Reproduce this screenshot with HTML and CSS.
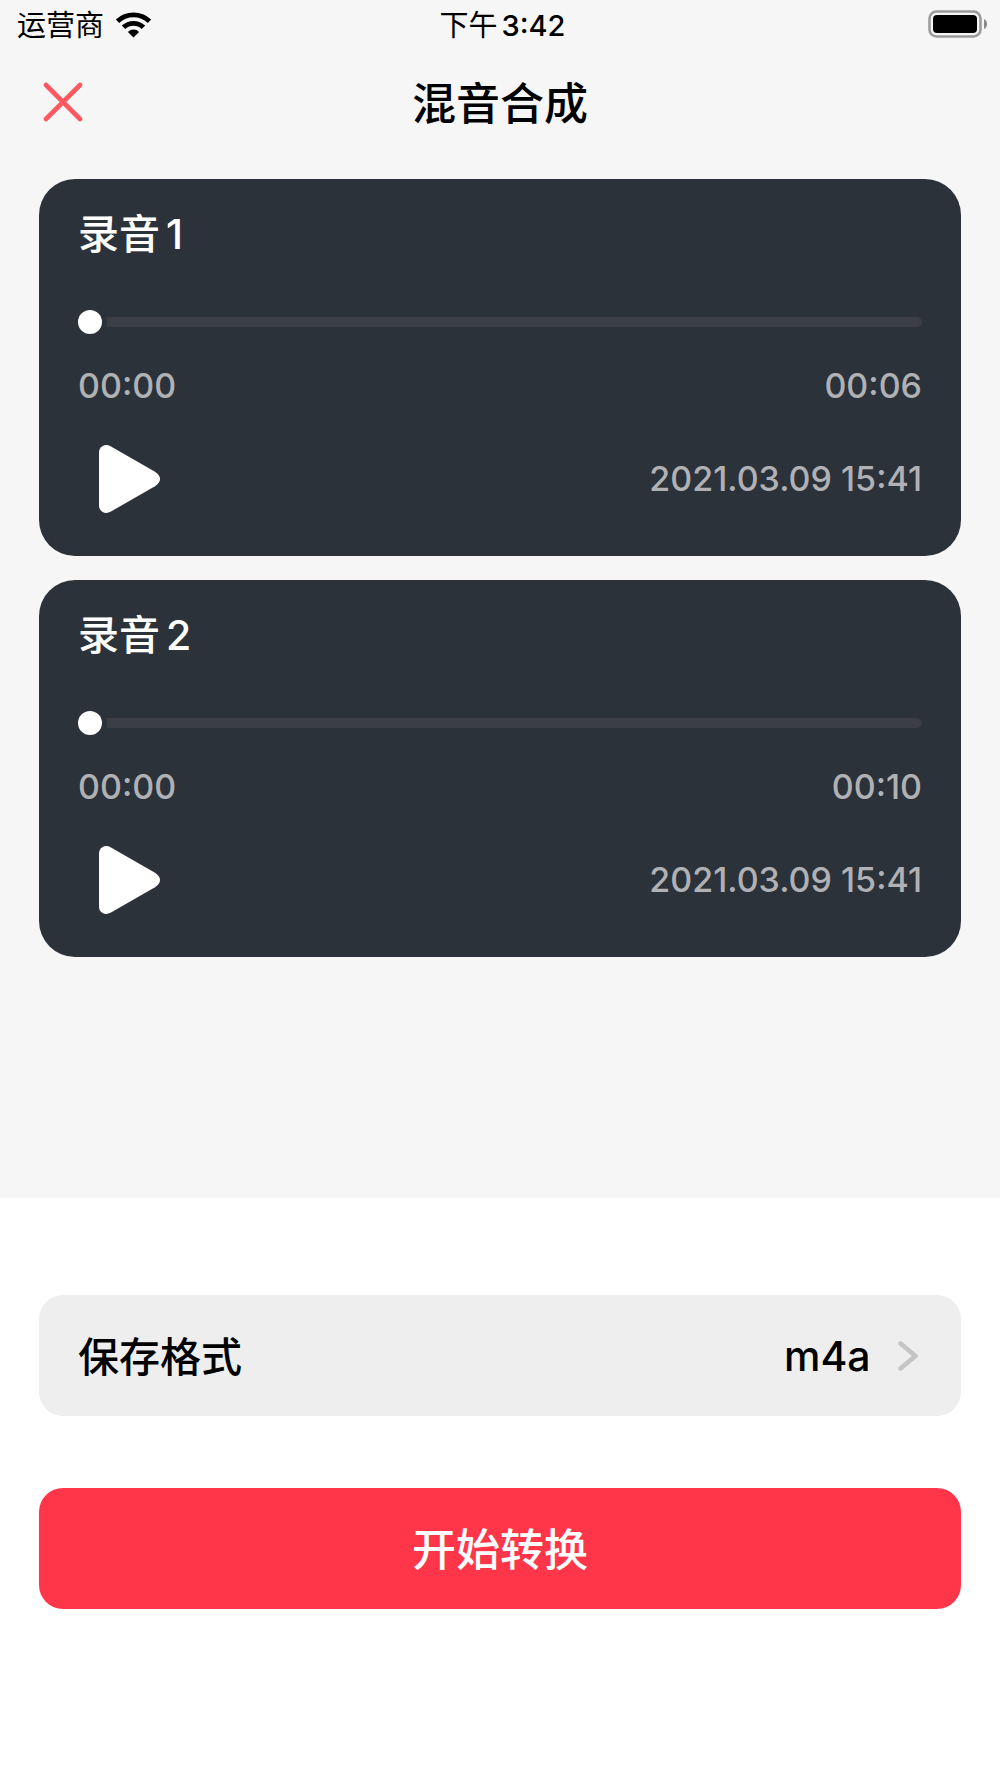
FILE: index.html
```
<!DOCTYPE html>
<html lang="zh-CN">
<head>
    <meta charset="UTF-8">
    <meta name="viewport" content="width=device-width, initial-scale=1.0">
    <title>混音合成</title>
    <link rel="stylesheet" href="styles.css">
</head>
<body>
    <div class="status">
        <div class="carrier">
            <span>运营商</span>
            <svg width="37" height="27" viewBox="0 0 37 27">
                <path d="M0.8 8.6 A25.6 25.6 0 0 1 36.2 8.6 L32.8 12 A20.6 20.6 0 0 0 4.2 12 Z"/>
                <path d="M6.8 14.6 A17 17 0 0 1 30.2 14.6 L26.7 18.1 A12 12 0 0 0 10.3 18.1 Z"/>
                <path d="M12.9 20.9 A8 8 0 0 1 24.1 20.9 L18.5 26.5 Z"/>
            </svg>
        </div>
        <div class="clock">下午<span class="time">3:42</span></div>
        <div class="battery">
            <svg width="60" height="28" viewBox="0 0 60 28">
                <rect x="1.5" y="1.5" width="51" height="25" rx="7" fill="none" stroke="#9b9b9b" stroke-width="2.6"/>
                <rect x="5" y="5" width="44" height="18" rx="4"/>
                <path d="M56 9 Q59 10.5 59 14 Q59 17.5 56 19 Z" fill="#888"/>
            </svg>
        </div>
    </div>

    <header class="nav">
        <button class="close" type="button" aria-label="关闭">
            <svg width="40" height="40" viewBox="0 0 40 40">
                <path d="M3 3 L37 37 M37 3 L3 37" fill="none" stroke="#ff5861" stroke-width="4.6" stroke-linecap="round"/>
            </svg>
        </button>
        <h1>混音合成</h1>
    </header>

    <main class="list">
        <section class="card">
            <h2>录音<span class="num">1</span></h2>
            <input class="slider" type="range" min="0" max="6" value="0" aria-label="录音1">
            <div class="row times">
                <span>00:00</span>
                <span>00:06</span>
            </div>
            <div class="row">
                <button class="play" type="button" aria-label="播放">
                    <svg width="61" height="68" viewBox="0 0 61 68">
                        <path d="M0 7.5 Q0 3 3.6 1 Q7.5 -1 12 1.5 L56 26.8 Q61 30 61 34 Q61 38 56 41.2 L12 66.5 Q7.5 69 3.6 67 Q0 65 0 60.5 Z" fill="#fff"/>
                    </svg>
                </button>
                <span>2021.03.09 15:41</span>
            </div>
        </section>
        <section class="card">
            <h2>录音<span class="num">2</span></h2>
            <input class="slider" type="range" min="0" max="10" value="0" aria-label="录音2">
            <div class="row times">
                <span>00:00</span>
                <span>00:10</span>
            </div>
            <div class="row">
                <button class="play" type="button" aria-label="播放">
                    <svg width="61" height="68" viewBox="0 0 61 68">
                        <path d="M0 7.5 Q0 3 3.6 1 Q7.5 -1 12 1.5 L56 26.8 Q61 30 61 34 Q61 38 56 41.2 L12 66.5 Q7.5 69 3.6 67 Q0 65 0 60.5 Z" fill="#fff"/>
                    </svg>
                </button>
                <span>2021.03.09 15:41</span>
            </div>
        </section>
    </main>

    <form class="panel">
        <div class="format">
            <label for="format">保存格式</label>
            <select id="format">
                <option>m4a</option>
            </select>
            <svg width="20" height="30" viewBox="0 0 20 30">
                <path d="M2.5 2.5 L17.5 15 L2.5 27.5" fill="none" stroke="#c5c5c7" stroke-width="4.6" stroke-linecap="round" stroke-linejoin="round"/>
            </svg>
        </div>
        <button class="start" type="button">开始转换</button>
    </form>
</body>
</html>
```
FILE: styles.css
```
*{
    box-sizing: border-box;
    margin: 0;
    padding: 0;
}
body{
    min-height: 100vh;
    display: flex;
    flex-direction: column;
    background: #f6f6f6;
    color: #000;
    font-family: Inter, "Noto Sans CJK SC", sans-serif;
}
svg{
    display: block;
}
button{
    border: none;
    background: none;
    font-family: inherit;
    cursor: pointer;
}
.status{
    display: grid;
    grid-template-columns: 1fr auto 1fr;
    align-items: center;
    height: 48px;
    padding: 0 12px 0 17px;
    font-size: 29px;
    line-height: 44px;
}
.carrier{
    display: flex;
    align-items: center;
    gap: 11px;
}
.carrier span,
.clock{
    padding-top: 4px;
}
.time{
    margin-left: 4px;
    font-weight: 500;
}
.battery{
    justify-self: end;
}
.nav{
    display: grid;
    grid-template-columns: 1fr auto 1fr;
    align-items: center;
    height: 107px;
    padding: 0 43px;
}
.close{
    justify-self: start;
}
.nav h1{
    padding-top: 4px;
    font-size: 44px;
    line-height: 60px;
    font-weight: 500;
}
.list{
    flex: 1;
    display: flex;
    flex-direction: column;
    gap: 24px;
    padding: 24px 39px;
}
.card{
    padding: 31px 39px 43px;
    border-radius: 36px;
    background: #2c323a;
    color: #b0b1b4;
    font-size: 34px;
    line-height: 40px;
    font-weight: 500;
}
.card h2{
    color: #fff;
    font-size: 41px;
    line-height: 48px;
    font-weight: 500;
}
.num{
    margin-left: 6px;
}
.slider{
    -webkit-appearance: none;
    appearance: none;
    display: block;
    width: 100%;
    height: 24px;
    margin-top: 52px;
    background: none;
}
.slider::-webkit-slider-runnable-track{
    height: 10px;
    border-radius: 5px;
    background: #3c3e46;
}
.slider::-webkit-slider-thumb{
    -webkit-appearance: none;
    width: 24px;
    height: 24px;
    margin-top: -7px;
    border-radius: 50%;
    background: #fff;
    box-shadow: 0 0 0 5px #2c323a;
}
.row{
    display: flex;
    justify-content: space-between;
    align-items: center;
}
.times{
    margin: 32px 0 39px;
}
.play{
    padding: 0 21px;
}
.panel{
    padding: 97px 39px 169px;
    background: #fff;
}
.format{
    display: flex;
    align-items: center;
    height: 121px;
    padding: 0 43px 0 39px;
    border-radius: 24px;
    background: #eee;
    font-size: 41px;
    line-height: 60px;
    font-weight: 500;
}
.format label{
    padding-top: 2px;
}
.format select{
    -webkit-appearance: none;
    appearance: none;
    margin-left: auto;
    margin-right: 27px;
    border: none;
    background: none;
    color: #000;
    font: inherit;
}
.start{
    display: block;
    width: 100%;
    height: 121px;
    margin-top: 72px;
    padding-top: 3px;
    border-radius: 24px;
    background: #ff3649;
    color: #fff;
    font-size: 44px;
    line-height: 64px;
    font-weight: 500;
}
```
